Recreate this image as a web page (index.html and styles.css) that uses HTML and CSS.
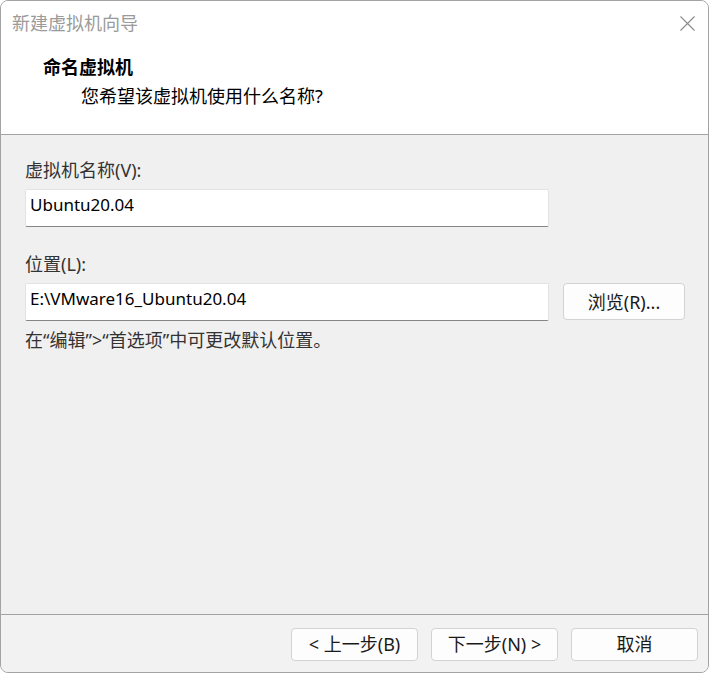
FILE: index.html
```html
<!DOCTYPE html>
<html lang="zh-CN">
<head>
    <meta charset="UTF-8">
    <meta name="viewport" content="width=device-width, initial-scale=1.0">
    <title>新建虚拟机向导</title>
    <link rel="stylesheet" href="styles.css">
</head>
<body>
    <div class="window">
        <div class="title-bar">
            <span class="title-text">新建虚拟机向导</span>
            <button class="close-button" aria-label="关闭">
                <svg width="15" height="15" viewBox="0 0 15 15">
                    <path d="M0.5 0.5 L14.5 14.5 M14.5 0.5 L0.5 14.5" stroke="#8a8a8a" stroke-width="1.1" fill="none"/>
                </svg>
            </button>
        </div>

        <div class="wizard-header">
            <h2>命名虚拟机</h2>
            <p>您希望该虚拟机使用什么名称?</p>
        </div>

        <div class="wizard-body">
            <label class="field-label" for="vmName">虚拟机名称(V):</label>
            <div class="field-row">
                <input type="text" id="vmName" class="text-input" value="Ubuntu20.04">
            </div>

            <label class="field-label second" for="vmPath">位置(L):</label>
            <div class="field-row">
                <input type="text" id="vmPath" class="text-input" value="E:\VMware16_Ubuntu20.04">
                <button class="win-button browse-button">浏览(R)...</button>
            </div>

            <p class="hint">在“编辑”&gt;“首选项”中可更改默认位置。</p>
        </div>

        <div class="wizard-footer">
            <button class="win-button">&lt; 上一步(B)</button>
            <button class="win-button">下一步(N) &gt;</button>
            <button class="win-button">取消</button>
        </div>
    </div>
</body>
</html>
```

FILE: styles.css
```css
:root {
    --border-color: #a3a3a3;
    --body-color: #f0f0f0;
    --footer-color: #f2f2f2;
    --text-color: #1a1a1a;
}

* {
    box-sizing: border-box;
}

body {
    font-family: "Noto Sans", "Noto Sans CJK SC", sans-serif;
    margin: 0;
    padding: 0;
    background-color: white;
    color: var(--text-color);
}

.window {
    width: 709px;
    height: 673px;
    border: 1px solid var(--border-color);
    border-radius: 8px;
    overflow: hidden;
    display: flex;
    flex-direction: column;
    background: var(--body-color);
}

.title-bar {
    height: 44px;
    background: white;
    display: flex;
    justify-content: space-between;
    align-items: center;
    padding: 0 13px 0 11px;
}

.title-text {
    font-size: 18px;
    line-height: 24px;
    color: #9a9a9a;
}

.close-button {
    background: none;
    border: none;
    padding: 0;
    width: 15px;
    height: 15px;
    display: flex;
    margin-top: 1px;
}

.wizard-header {
    background: white;
    padding: 10px 0 26px 42px;
    border-bottom: 1px solid var(--border-color);
}

.wizard-header h2 {
    font-size: 18px;
    line-height: 24px;
    font-weight: bold;
    margin: 0;
    color: black;
}

.wizard-header p {
    font-size: 18px;
    line-height: 24px;
    margin: 5px 0 0 38px;
    color: black;
}

.wizard-body {
    flex: 1;
    padding: 23px 0 0 24px;
    display: flex;
    flex-direction: column;
}

.field-label {
    font-size: 18px;
    line-height: 24px;
    color: #333;
    margin-bottom: 7px;
}

.field-label.second {
    margin-top: 25px;
}

.field-row {
    display: flex;
    align-items: flex-start;
    gap: 14px;
}

.text-input {
    width: 524px;
    height: 38px;
    border: 1px solid #e3e3e3;
    border-bottom: 1px solid #868686;
    border-radius: 2px;
    background: white;
    padding: 0 4px 7px 4px;
    font-family: "Noto Sans", "Noto Sans CJK SC", sans-serif;
    font-size: 17px;
    color: black;
    outline: none;
}

.win-button {
    font-family: "Noto Sans", "Noto Sans CJK SC", sans-serif;
    font-size: 18px;
    color: #1a1a1a;
    background: #fdfdfd;
    border: 1px solid #d3d3d3;
    border-radius: 4px;
    padding: 0;
    cursor: pointer;
}

.browse-button {
    width: 122px;
    height: 37px;
    padding-bottom: 2px;
}

.hint {
    font-size: 18px;
    line-height: 24px;
    margin: 7px 0 0 0;
    color: #333;
}

.wizard-footer {
    height: 58px;
    background: var(--footer-color);
    border-top: 1px solid var(--border-color);
    display: flex;
    justify-content: flex-end;
    align-items: flex-start;
    gap: 13px;
    padding: 13px 10px 0 0;
}

.wizard-footer .win-button {
    width: 127px;
    height: 33px;
    padding-bottom: 4px;
}
```
